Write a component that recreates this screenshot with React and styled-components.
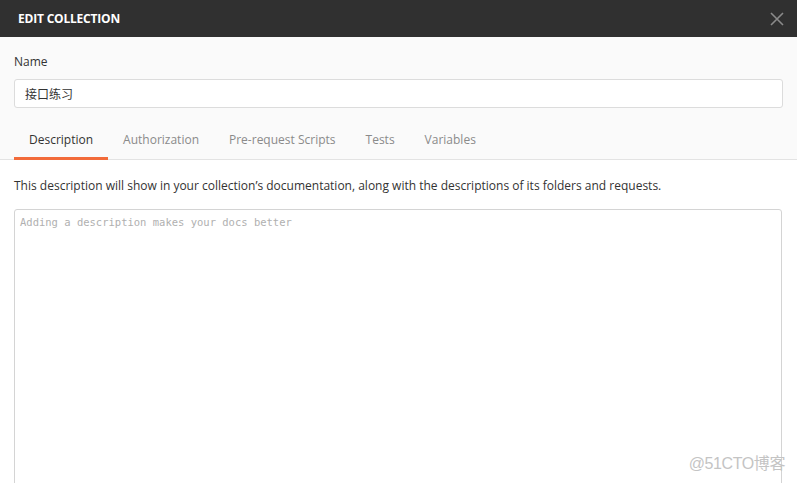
import styled, { createGlobalStyle } from "styled-components";

const GlobalStyle = createGlobalStyle`
  html, body {
    margin: 0;
    padding: 0;
    background: #fafafa;
    overflow: hidden;
  }
  body {
    font-family: "Open Sans", "Noto Sans", "Noto Sans CJK SC", sans-serif;
  }
`;

const Modal = styled.div`
  width: 797px;
  height: 483px;
  display: flex;
  flex-direction: column;
  background: #fafafa;
  position: relative;
  overflow: hidden;
`;

const Header = styled.div`
  height: 37px;
  flex: none;
  background: #303030;
  display: flex;
  align-items: center;
  justify-content: space-between;
  padding: 0 13px 0 18px;
`;

const Title = styled.h1`
  margin: 0;
  color: #fff;
  font-size: 12px;
  font-weight: 700;
  letter-spacing: -0.2px;
`;

const CloseButton = styled.button`
  border: 0;
  background: none;
  padding: 0;
  width: 14px;
  height: 14px;
  display: flex;
  cursor: pointer;
`;

const Section = styled.div`
  padding: 0 14px 0 14px;
  display: flex;
  flex-direction: column;
`;

const Label = styled.label`
  margin-top: 16px;
  font-size: 12px;
  color: #333;
  line-height: 17px;
`;

const NameInput = styled.input`
  margin-top: 9px;
  height: 29px;
  box-sizing: border-box;
  border: 1px solid #dcdcdc;
  border-radius: 3px;
  background: #fff;
  padding: 0 10px;
  font-family: "Open Sans", "Noto Sans CJK SC", sans-serif;
  font-size: 12px;
  color: #333;
  outline: none;
`;

const TabBar = styled.div`
  margin-top: 19px;
  display: flex;
  padding: 0 14px;
  border-bottom: 1px solid #e3e3e3;
`;

const Tab = styled.div`
  padding: 4px 15px 9px;
  font-size: 12px;
  line-height: 17px;
  color: ${(p) => (p.$active ? "#333" : "#8a8a8a")};
  border-bottom: 3px solid ${(p) => (p.$active ? "#f26b3a" : "transparent")};
  margin-bottom: -1px;
`;

const Body = styled.div`
  flex: 1;
  background: #fff;
  padding: 0 15px 0 14px;
  display: flex;
  flex-direction: column;
`;

const Hint = styled.p`
  margin: 17px 0 0;
  font-size: 12px;
  line-height: 17px;
  color: #333;
`;

const DescriptionArea = styled.textarea`
  margin-top: 15px;
  flex: 1;
  margin-bottom: -10px;
  border: 1px solid #d4d4d4;
  border-radius: 3px;
  padding: 6px 5px;
  resize: none;
  outline: none;
  font-family: "DejaVu Sans Mono", "Liberation Mono", monospace;
  font-size: 10.5px;
  color: #333;
  &::placeholder {
    color: #b0b0b0;
  }
`;

const Watermark = styled.span`
  position: absolute;
  right: 12px;
  bottom: 9px;
  font-family: "Liberation Sans", "Noto Sans CJK SC", sans-serif;
  font-size: 16px;
  color: #c4c4c4;
  letter-spacing: -0.4px;
`;

const tabs = ["Description", "Authorization", "Pre-request Scripts", "Tests", "Variables"];

export default function App() {
  return (
    <>
      <GlobalStyle />
      <Modal>
        <Header>
          <Title>EDIT COLLECTION</Title>
          <CloseButton aria-label="close">
            <svg width="14" height="14" viewBox="0 0 14 14">
              <path d="M1 1L13 13M13 1L1 13" stroke="#8a8a8a" strokeWidth="1.6" />
            </svg>
          </CloseButton>
        </Header>
        <Section>
          <Label>Name</Label>
          <NameInput defaultValue="接口练习" />
        </Section>
        <TabBar>
          {tabs.map((t, i) => (
            <Tab key={t} $active={i === 0}>
              {t}
            </Tab>
          ))}
        </TabBar>
        <Body>
          <Hint>
            This description will show in your collection’s documentation, along with the
            descriptions of its folders and requests.
          </Hint>
          <DescriptionArea placeholder="Adding a description makes your docs better" />
        </Body>
        <Watermark>@51CTO博客</Watermark>
      </Modal>
    </>
  );
}
